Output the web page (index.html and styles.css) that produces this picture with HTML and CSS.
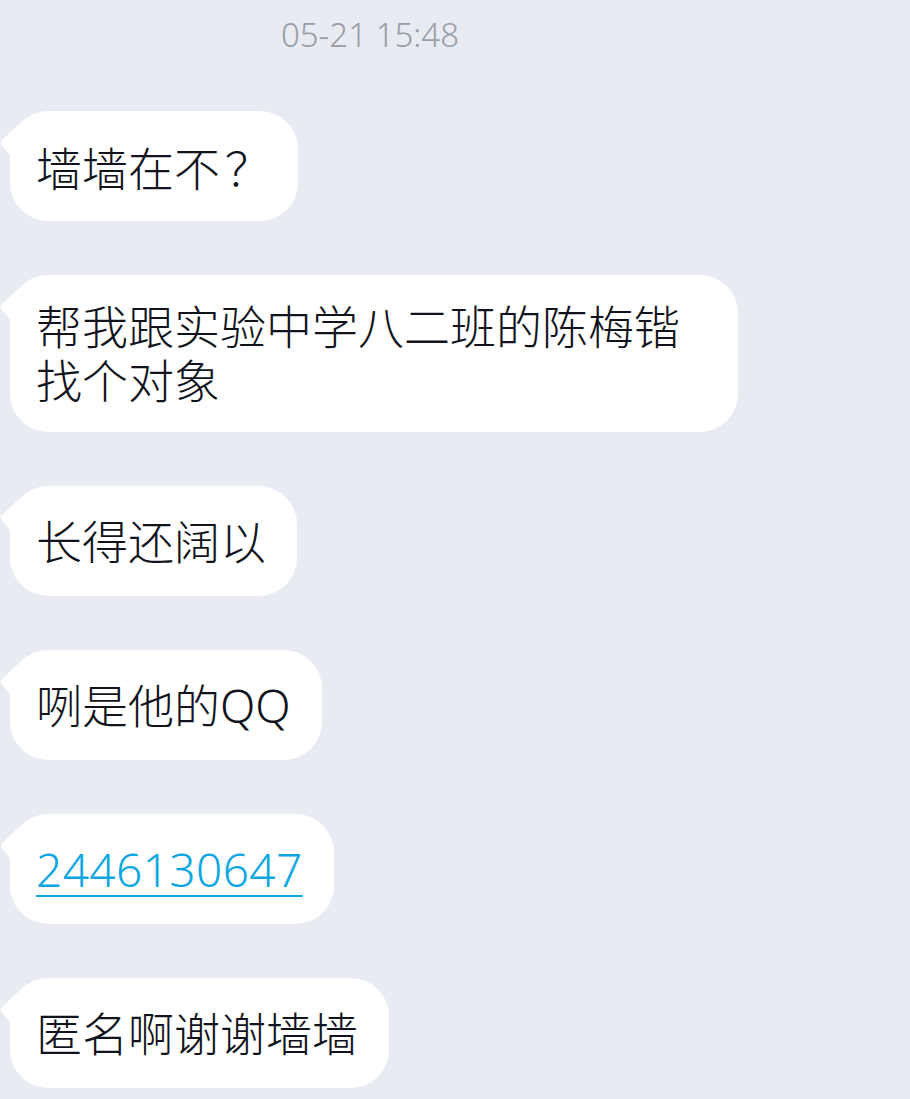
FILE: index.html
```html
<!DOCTYPE html>
<html lang="zh-CN">
<head>
<meta charset="utf-8">
<title>聊天</title>
<link rel="stylesheet" href="styles.css">
</head>
<body>
<main class="chat">
  <div class="time">05-21 15:48</div>
  <div class="messages">
    <div class="bubble"><svg class="tail" viewBox="0 0 18 40" width="18" height="40"><path d="M18 0 L1 16 Q0 18 1.5 20 L18 40 Z"/></svg>墙墙在不<span class="cjk">？</span></div>
    <div class="bubble bubble--multi"><svg class="tail" viewBox="0 0 18 40" width="18" height="40"><path d="M18 0 L1 16 Q0 18 1.5 20 L18 40 Z"/></svg>帮我跟实验中学八二班的陈梅锴找个对象</div>
    <div class="bubble"><svg class="tail" viewBox="0 0 18 40" width="18" height="40"><path d="M18 0 L1 16 Q0 18 1.5 20 L18 40 Z"/></svg>长得还阔以</div>
    <div class="bubble"><svg class="tail" viewBox="0 0 18 40" width="18" height="40"><path d="M18 0 L1 16 Q0 18 1.5 20 L18 40 Z"/></svg>咧是他的QQ</div>
    <div class="bubble"><svg class="tail" viewBox="0 0 18 40" width="18" height="40"><path d="M18 0 L1 16 Q0 18 1.5 20 L18 40 Z"/></svg><a class="link" href="#">2446130647</a></div>
    <div class="bubble"><svg class="tail" viewBox="0 0 18 40" width="18" height="40"><path d="M18 0 L1 16 Q0 18 1.5 20 L18 40 Z"/></svg>匿名啊谢谢墙墙</div>
  </div>
</main>
</body>
</html>
```
FILE: styles.css
```css
html, body {
  margin: 0;
  padding: 0;
}
body {
  background: #e9ebf3;
  min-height: 100vh;
  overflow: hidden;
}
.chat {
  width: 740px;
  font-family: "Noto Sans", "Noto Sans CJK SC", sans-serif;
}
.time {
  padding-top: 15px;
  height: 40px;
  line-height: 40px;
  font-size: 33px;
  font-weight: 300;
  color: #9a9da6;
  text-align: center;
}
.messages {
  margin-top: 56px;
  padding-left: 10px;
  display: flex;
  flex-direction: column;
  align-items: flex-start;
  gap: 54px;
}
.bubble {
  position: relative;
  box-sizing: border-box;
  height: 110px;
  max-width: 728px;
  background: #ffffff;
  border-radius: 38px;
  padding: 29px 31px 29px 26px;
  font-size: 46px;
  font-weight: 300;
  line-height: 52px;
  color: #11131c;
  white-space: nowrap;
}
.bubble--multi {
  height: 157px;
  line-height: 54px;
  padding-top: 24px;
  padding-bottom: 25px;
  width: 728px;
  white-space: normal;
}
.cjk {
  font-family: "Noto Sans CJK TC", sans-serif;
  margin-left: 5px;
  margin-right: -4px;
}
.tail {
  position: absolute;
  left: -10px;
  top: 14px;
  fill: #ffffff;
}
.link {
  color: #0aa6e2;
  text-decoration: underline;
  text-decoration-thickness: 2px;
  text-underline-offset: 8px;
  letter-spacing: 0.4px;
}
```
